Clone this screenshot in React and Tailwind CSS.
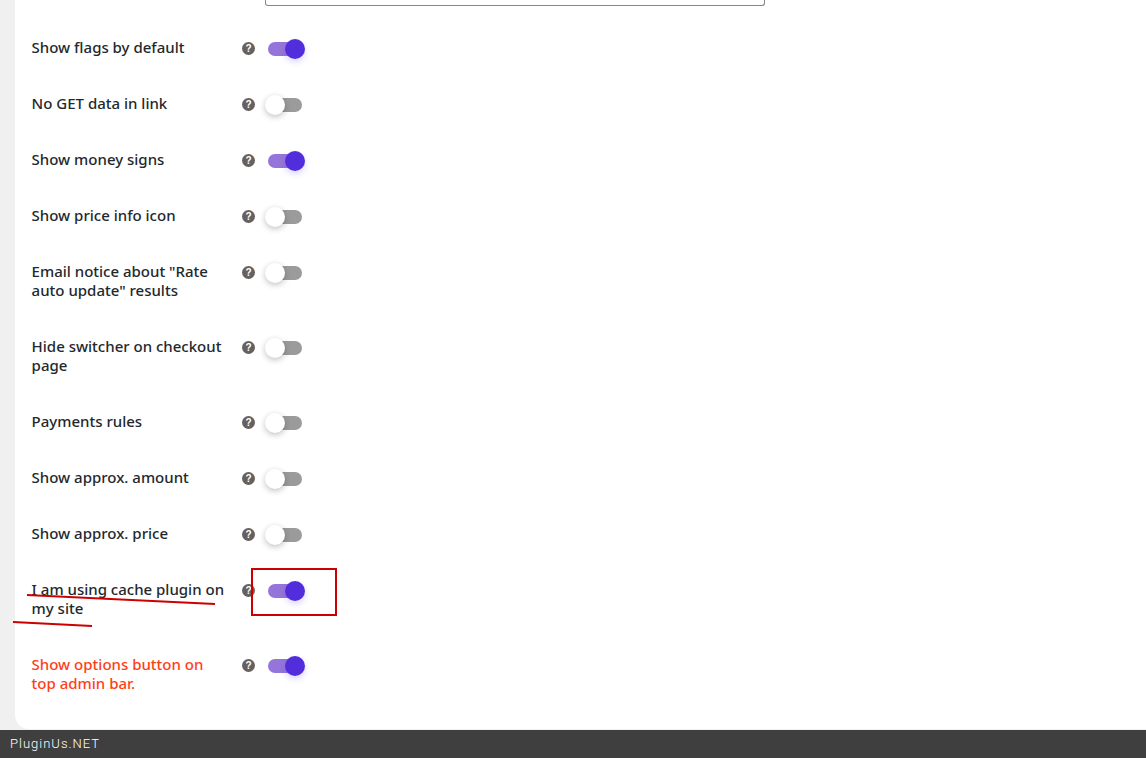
const rows = [
  { label: "Show flags by default", on: true },
  { label: "No GET data in link", on: false },
  { label: "Show money signs", on: true },
  { label: "Show price info icon", on: false },
  { label: 'Email notice about "Rate auto update" results', on: false },
  { label: "Hide switcher on checkout page", on: false },
  { label: "Payments rules", on: false },
  { label: "Show approx. amount", on: false },
  { label: "Show approx. price", on: false },
  { label: "I am using cache plugin on my site", on: true },
  { label: "Show options button on top admin bar.", on: true, red: true },
];

function Toggle({ on }) {
  return (
    <div className="relative mt-[4px] h-[14px] w-[34px]">
      <div className={on ? "h-[14px] w-[34px] rounded-full bg-[#9575d9]" : "h-[14px] w-[34px] rounded-full bg-[#9b9b9b]"} />
      {on ? (
        <div className="absolute left-[17px] top-[-3px] h-5 w-5 rounded-full bg-[#512ddb] shadow-[0_3px_6px_rgba(81,45,219,0.2)]" />
      ) : (
        <div className="absolute left-[-3px] top-[-3px] h-5 w-5 rounded-full bg-white shadow-[0_2px_6px_rgba(0,0,0,0.25)]" />
      )}
    </div>
  );
}

function Help() {
  return (
    <div className="mt-[4px] flex h-[13px] w-[13px] items-center justify-center rounded-full bg-[#666060] text-[10px] leading-none font-bold text-white font-['Liberation_Sans',sans-serif]">
      ?
    </div>
  );
}

export default function App() {
  return (
    <div className="flex h-[758px] w-[1146px] flex-col overflow-hidden bg-[#f0f0f0] font-['Noto_Sans',sans-serif]">
      <div className="relative ml-[15px] h-[729px] rounded-bl-[14px] bg-white">
        <div className="ml-[250px] h-[6px] w-[500px] rounded-b-[3px] border-x border-b border-[#7e8993]" />
        <div className="ml-[16px] flex w-[320px] flex-col pt-[32px]">
          {rows.map((r) => (
            <div key={r.label} className="flex items-start pb-[37px]">
              <div className={r.red ? "ml-[0.6px] w-[194.4px] text-[15px] leading-[19px] font-medium text-[#ff3e17]" : "ml-[0.6px] w-[194.4px] text-[15px] leading-[19px] font-medium text-[#23282d]"}>
                {r.label}
              </div>
              <div className="ml-[16px] w-[26px]">
                <Help />
              </div>
              <Toggle on={r.on} />
            </div>
          ))}
        </div>
        <div className="absolute left-[236px] top-[568px] h-[48px] w-[86px] border-2 border-[#cc0000]" />
        <svg className="absolute left-[-15px] top-[585px]" width="240" height="50" fill="none" stroke="#cc0000" strokeWidth="2">
          <path d="M27 10 L215 19" />
          <path d="M13 37 L92 41" />
        </svg>
      </div>
      <div className="mt-[1px] flex h-[28px] items-center bg-[#3f3f3f] pl-[10px] text-[13px] font-light tracking-[1px] text-white font-['Roboto',sans-serif]">
        PluginUs.NET
      </div>
    </div>
  );
}
